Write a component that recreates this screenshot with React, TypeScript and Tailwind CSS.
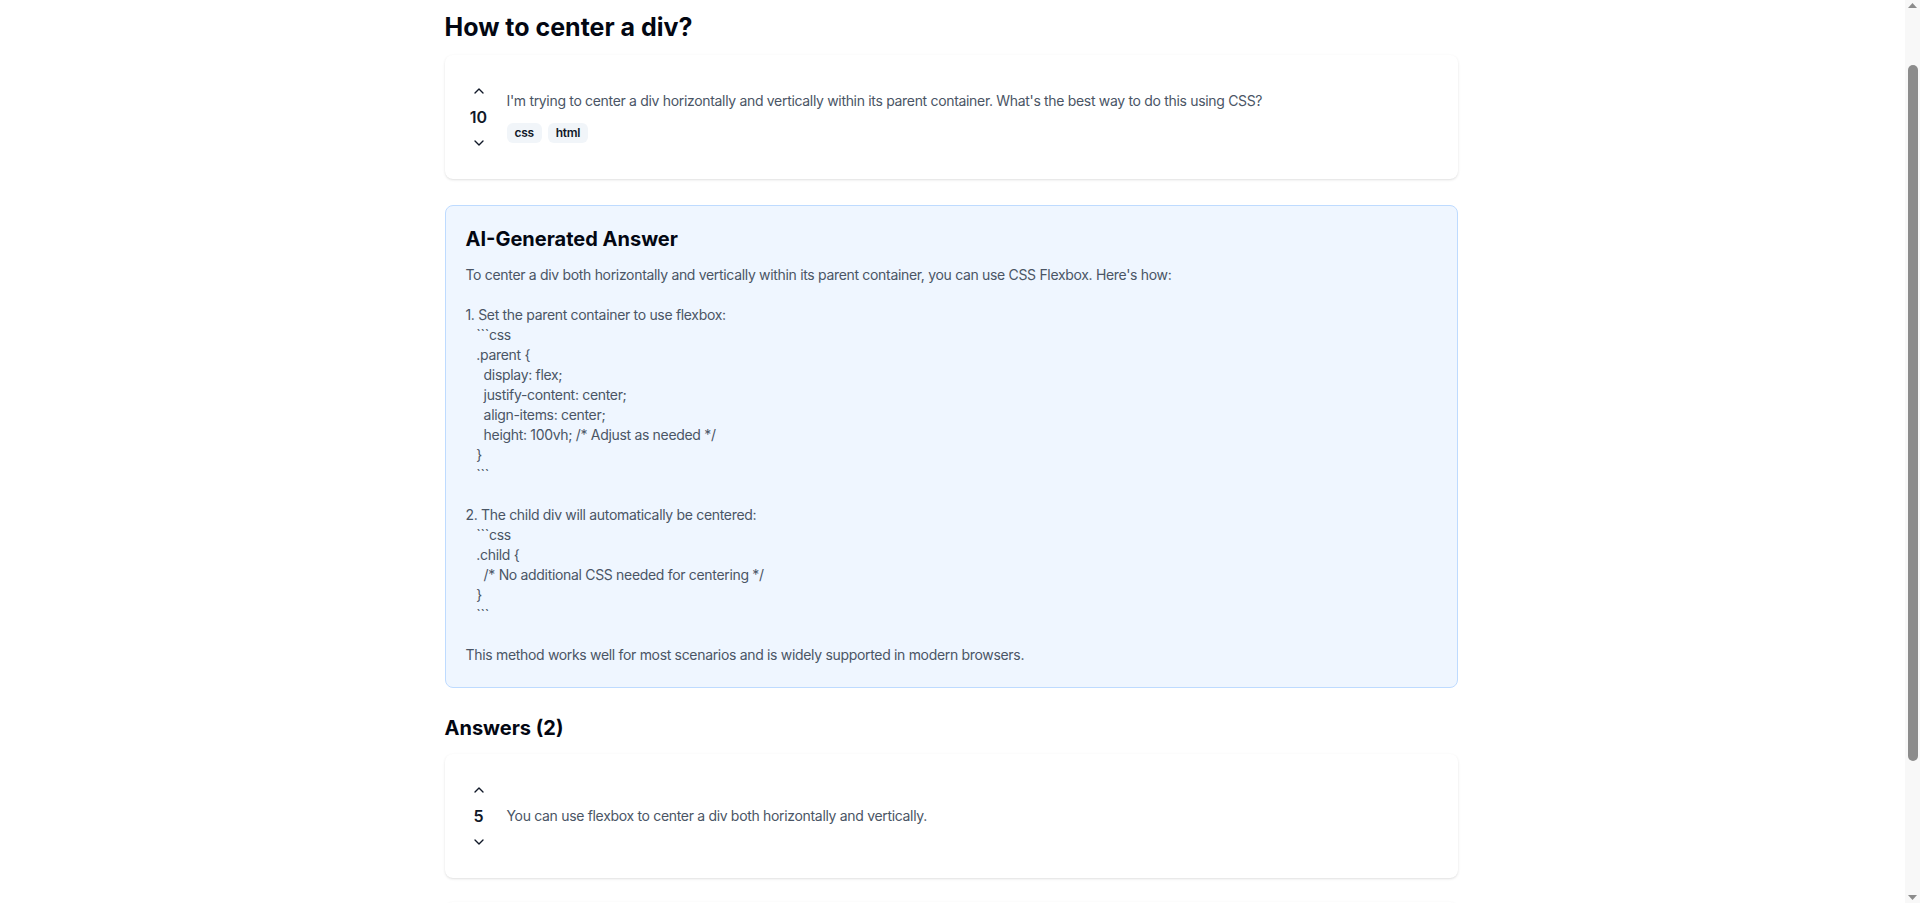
import { ChevronDown, ChevronUp } from "lucide-react";

const QUESTION = {
  title: "How to center a div?",
  body: "I'm trying to center a div horizontally and vertically within its parent container. What's the best way to do this using CSS?",
  votes: 10,
  tags: ["css", "html"],
};

const AI_ANSWER =
  "To center a div both horizontally and vertically within its parent container, you can use CSS Flexbox. Here's how:\n\n" +
  "1. Set the parent container to use flexbox:\n" +
  "   ```css\n" +
  "   .parent {\n" +
  "     display: flex;\n" +
  "     justify-content: center;\n" +
  "     align-items: center;\n" +
  "     height: 100vh; /* Adjust as needed */\n" +
  "   }\n" +
  "   ```\n\n" +
  "2. The child div will automatically be centered:\n" +
  "   ```css\n" +
  "   .child {\n" +
  "     /* No additional CSS needed for centering */\n" +
  "   }\n" +
  "   ```\n\n" +
  "This method works well for most scenarios and is widely supported in modern browsers.";

const ANSWERS = [
  { id: 1, votes: 5, body: "You can use flexbox to center a div both horizontally and vertically." },
  { id: 2, votes: 3, body: "CSS Grid works too: set display: grid and place-items: center on the parent." },
];

function VoteColumn({ votes }: { votes: number }) {
  return (
    <div className="flex w-5 shrink-0 flex-col items-center gap-0.5">
      <button className="rounded px-0.5 py-1 text-gray-900 hover:bg-gray-100" aria-label="Upvote">
        <ChevronUp className="h-4 w-4" />
      </button>
      <span className="text-base font-semibold leading-6 text-gray-900">{votes}</span>
      <button className="rounded px-0.5 py-1 text-gray-900 hover:bg-gray-100" aria-label="Downvote">
        <ChevronDown className="h-4 w-4" />
      </button>
    </div>
  );
}

// Browser scrollbar as it shows in the capture
function Scrollbar() {
  return (
    <div aria-hidden className="fixed right-0 top-0 flex h-screen w-[15px] flex-col items-center bg-[#f8f8f8]">
      <svg className="mt-[3px] h-[5px] w-[9px] text-[#8c8c8c]" viewBox="0 0 9 5" fill="currentColor">
        <path d="M4.5 0L9 5H0z" />
      </svg>
      <div className="mt-[57px] h-[696px] w-[10px] rounded-full bg-[#8c8c8c]" />
      <svg className="mt-auto mb-[3px] h-[5px] w-[9px] text-[#8c8c8c]" viewBox="0 0 9 5" fill="currentColor">
        <path d="M0 0H9L4.5 5z" />
      </svg>
    </div>
  );
}

export default function App() {
  return (
    <div className="min-h-screen bg-white pr-[18px] font-['Inter',sans-serif] text-gray-900">
      <main className="mx-auto max-w-[1013px] pt-[11px] pb-[106px]">
        <h1 className="mb-3 text-[25px] font-bold leading-8 text-gray-950">{QUESTION.title}</h1>

        {/* Question */}
        <div className="mb-[26px] flex items-center gap-[18px] rounded-lg bg-white p-6 shadow-sm">
          <VoteColumn votes={QUESTION.votes} />
          <div>
            <p className="text-sm leading-5 tracking-[-0.32px] text-gray-600">{QUESTION.body}</p>
            <div className="mt-3 flex gap-1.5">
              {QUESTION.tags.map((tag) => (
                <span
                  key={tag}
                  className="rounded-md bg-slate-100 px-2 py-0.5 text-xs font-semibold leading-4 tracking-[-0.3px] text-gray-900"
                >
                  {tag}
                </span>
              ))}
            </div>
          </div>
        </div>

        {/* AI answer */}
        <div className="mb-[26px] rounded-lg border border-blue-200 bg-blue-50 px-5 pt-[21px] pb-[22px]">
          <h2 className="mb-3.5 text-xl font-bold leading-6 text-gray-950">AI-Generated Answer</h2>
          <p className="whitespace-pre-wrap text-sm leading-5 tracking-[-0.32px] text-gray-600">{AI_ANSWER}</p>
        </div>

        {/* Answers */}
        <h2 className="mb-3 text-xl font-bold leading-7 text-gray-950">Answers ({ANSWERS.length})</h2>
        <div className="space-y-6">
          {ANSWERS.map((answer) => (
            <div key={answer.id} className="flex items-center gap-[18px] rounded-lg bg-white p-6 shadow-sm">
              <VoteColumn votes={answer.votes} />
              <p className="text-sm leading-5 tracking-[-0.32px] text-gray-600">{answer.body}</p>
            </div>
          ))}
        </div>
      </main>
      <Scrollbar />
    </div>
  );
}
